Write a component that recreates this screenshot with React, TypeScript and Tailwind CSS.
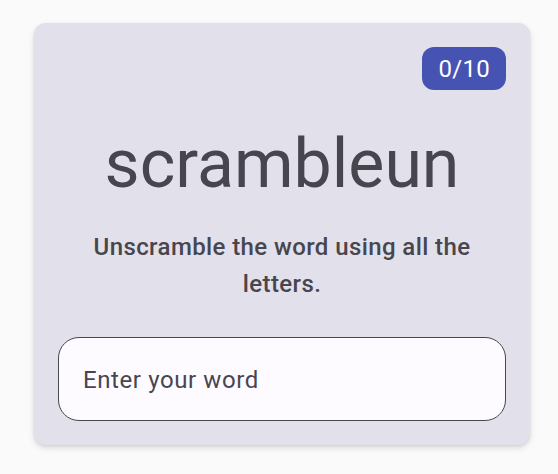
export default function App() {
  return (
    <div className="min-h-screen w-full bg-[#fafafa] pt-[23px] font-['Roboto',sans-serif]">
      <div className="ml-[34px] w-[496px] rounded-[12px] bg-[#e2e0eb] p-6 shadow-[0_3px_6px_rgba(0,0,0,0.12),0_1px_3px_rgba(0,0,0,0.08)]">
        <div className="flex justify-end">
          <div className="flex h-[43px] items-center rounded-[12px] bg-[#4653b3] px-4 text-[24px] leading-[36px] tracking-[0.3px] text-white">
            0/10
          </div>
        </div>
        <h1 className="mt-[35px] text-center text-[68px] font-normal leading-[78px] text-[#47464f]">
          scrambleun
        </h1>
        <p className="mt-[26px] px-5 text-center text-[24px] font-medium leading-[37px] tracking-[0.4px] text-[#47464f]">
          Unscramble the word using all the letters.
        </p>
        <div className="mt-[34px] flex h-[84px] items-center rounded-[21px] border border-[#48464e] bg-[#fdfbff] px-6">
          <input
            className="w-full bg-transparent pt-[2px] text-[24px] leading-[36px] tracking-[0.6px] text-[#47464f] outline-none placeholder:text-[#49454f]"
            placeholder="Enter your word"
          />
        </div>
      </div>
    </div>
  );
}
